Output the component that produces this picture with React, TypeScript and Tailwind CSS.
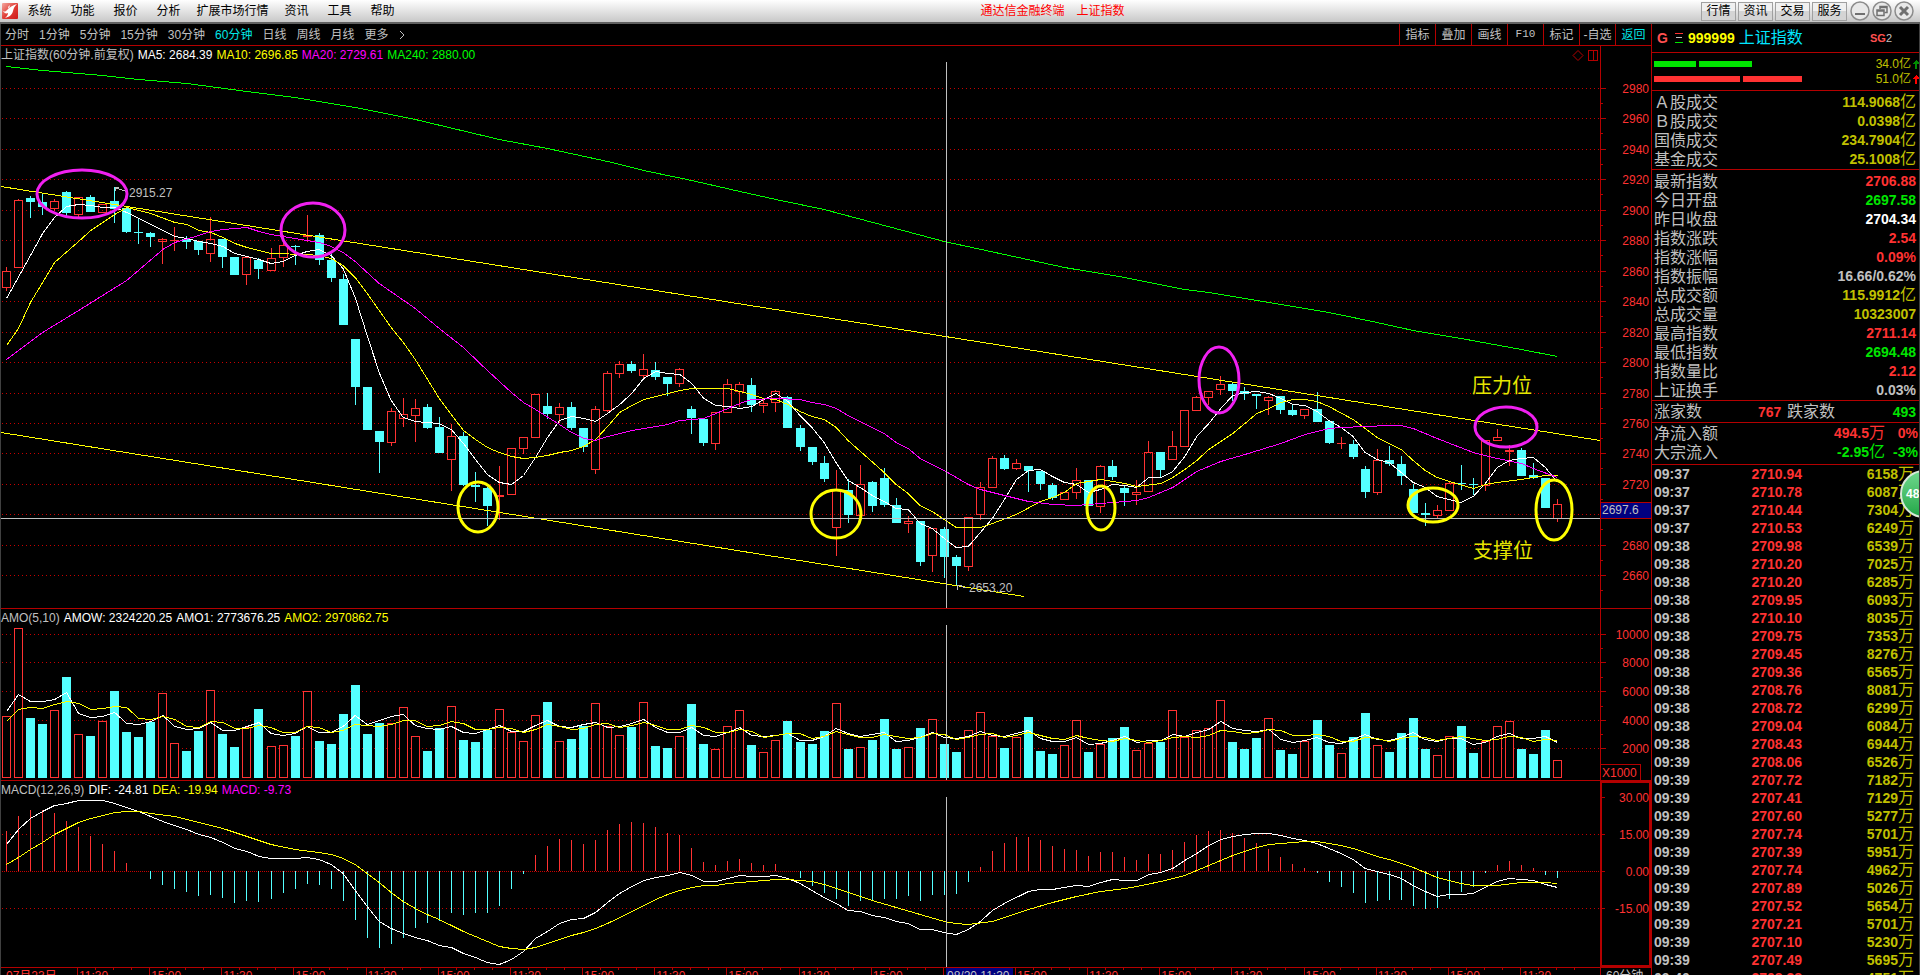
import React from "react";

/* ---------- chart data ---------- */

type Dir = "u" | "d";
type Candle = [Dir, number, number, number, number];

// direction, body top, body bottom, wick top, wick bottom (plot units)
const CANDLES: Candle[] = [
  ["u", 271, 288, 267, 291], ["u", 200, 268, 199, 268], ["d", 198, 202, 196, 218], ["d", 202, 207, 193, 215],
  ["u", 201, 209, 199, 211], ["d", 192, 213, 191, 216], ["u", 197, 215, 197, 217], ["d", 197, 212, 195, 212],
  ["u", 204, 213, 204, 213], ["d", 201, 209, 187, 223], ["d", 208, 232, 208, 233], ["d", 232, 233, 218, 244],
  ["d", 233, 237, 232, 247], ["u", 239, 242, 238, 264], ["u", 240, 241, 227, 251], ["d", 239, 242, 236, 249],
  ["d", 241, 250, 241, 255], ["u", 239, 254, 217, 262], ["d", 239, 257, 239, 268], ["d", 257, 275, 257, 275],
  ["u", 257, 275, 257, 285], ["d", 260, 269, 258, 279], ["u", 258, 271, 248, 271], ["u", 245, 258, 235, 267],
  ["d", 246, 247, 245, 265], ["u", 235, 237, 215, 242], ["d", 235, 260, 233, 265], ["d", 260, 278, 254, 282],
  ["d", 279, 325, 274, 325], ["d", 339, 387, 339, 405], ["d", 387, 430, 387, 430], ["d", 431, 442, 431, 473],
  ["u", 411, 443, 408, 446], ["u", 414, 419, 398, 427], ["u", 408, 416, 399, 442], ["d", 407, 428, 404, 429],
  ["d", 427, 453, 417, 453], ["u", 436, 460, 424, 491], ["d", 436, 485, 432, 486], ["d", 485, 487, 472, 502],
  ["d", 488, 506, 487, 526], ["u", 495, 497, 466, 520], ["u", 448, 495, 448, 495], ["u", 437, 449, 437, 454],
  ["u", 394, 438, 394, 438], ["d", 406, 414, 393, 419], ["u", 407, 415, 403, 423], ["d", 407, 428, 402, 430],
  ["d", 428, 447, 428, 452], ["u", 409, 470, 406, 474], ["u", 373, 411, 371, 412], ["u", 364, 374, 361, 378],
  ["d", 364, 371, 361, 373], ["u", 369, 376, 354, 379], ["d", 370, 377, 362, 380], ["d", 377, 384, 377, 396],
  ["u", 369, 384, 368, 387], ["d", 409, 418, 406, 434], ["d", 419, 443, 418, 446], ["u", 412, 444, 412, 450],
  ["u", 384, 413, 379, 413], ["u", 384, 392, 382, 407], ["d", 385, 405, 378, 412], ["u", 403, 406, 400, 413],
  ["u", 391, 403, 390, 412], ["d", 397, 428, 396, 428], ["d", 428, 447, 425, 451], ["d", 447, 462, 447, 465],
  ["d", 463, 479, 456, 482], ["u", 490, 528, 470, 556], ["d", 490, 515, 479, 523], ["u", 484, 516, 465, 516],
  ["d", 482, 506, 481, 512], ["d", 478, 505, 468, 507], ["d", 505, 523, 498, 523], ["u", 521, 524, 516, 533],
  ["d", 521, 562, 521, 566], ["u", 528, 556, 528, 572], ["d", 529, 557, 527, 578], ["d", 557, 566, 555, 586],
  ["u", 517, 567, 517, 571], ["u", 487, 515, 482, 520], ["u", 458, 488, 456, 488], ["d", 458, 469, 455, 470],
  ["u", 463, 469, 459, 470], ["d", 466, 471, 466, 492], ["d", 471, 484, 471, 490], ["d", 485, 498, 483, 500],
  ["u", 492, 500, 492, 500], ["u", 480, 493, 468, 499], ["d", 480, 506, 480, 506], ["u", 466, 507, 465, 513],
  ["d", 466, 477, 460, 480], ["d", 488, 493, 485, 506], ["u", 492, 495, 480, 505], ["u", 452, 492, 441, 492],
  ["d", 452, 470, 452, 477], ["u", 446, 460, 431, 460], ["u", 410, 447, 410, 447], ["u", 397, 411, 396, 411],
  ["u", 391, 398, 391, 405], ["u", 384, 390, 376, 395], ["d", 384, 391, 382, 401], ["d", 391, 394, 387, 400],
  ["d", 394, 396, 394, 409], ["u", 397, 401, 396, 415], ["d", 396, 410, 396, 414], ["d", 410, 415, 404, 416],
  ["u", 409, 416, 409, 419], ["d", 409, 422, 392, 422], ["d", 421, 443, 420, 444], ["u", 443, 444, 437, 449],
  ["d", 444, 457, 440, 459], ["d", 469, 492, 466, 498], ["u", 460, 493, 449, 495], ["d", 460, 464, 446, 466],
  ["d", 464, 476, 456, 485], ["d", 489, 513, 484, 513], ["d", 513, 515, 503, 526], ["u", 510, 516, 505, 519],
  ["u", 483, 511, 482, 511], ["d", 483, 484, 465, 490], ["d", 484, 485, 478, 495], ["u", 440, 486, 440, 491],
  ["u", 437, 441, 429, 441], ["u", 450, 452, 445, 466], ["d", 450, 476, 448, 476], ["d", 475, 478, 463, 479],
  ["d", 478, 508, 478, 508], ["u", 504, 519, 499, 522],
];

const VOLUME = [
  716, 628, 718, 724, 710, 677, 734, 736, 721, 691, 732, 737, 722, 693, 743, 751, 731, 690, 734, 747, 727, 709, 746, 745, 736, 691,
  741, 744, 714, 685, 734, 723, 723, 707, 736, 751, 728, 706, 740, 742, 730, 709, 732, 741, 715, 702, 741, 739, 726, 703, 726, 735,
  727, 702, 746, 748, 736, 704, 744, 749, 726, 710, 745, 752, 740, 721, 742, 744, 731, 703, 749, 747, 740, 719, 749, 747, 728, 719,
  744, 752, 730, 712, 736, 748, 737, 717, 751, 754, 745, 720, 752, 744, 738, 727, 750, 743, 742, 710, 737, 730, 728, 700, 742, 749,
  738, 718, 750, 754, 741, 720, 745, 753, 737, 713, 745, 752, 733, 718, 749, 755, 736, 726, 753, 741, 726, 721, 749, 754, 730, 760,
];

const AMO1 = [
  711, 694, 701, 701, 699, 692, 713, 717, 716, 712, 723, 724, 721, 715, 726, 729, 728, 722, 730, 730, 726, 722, 733, 735, 733, 726,
  732, 732, 726, 715, 724, 720, 716, 714, 725, 728, 729, 726, 732, 733, 729, 725, 731, 731, 725, 720, 726, 727, 724, 722, 727, 726,
  723, 719, 727, 732, 732, 727, 735, 736, 732, 727, 735, 736, 735, 733, 740, 740, 736, 728, 733, 736, 734, 732, 741, 740, 737, 732,
  737, 738, 736, 731, 735, 736, 733, 730, 738, 741, 741, 737, 744, 743, 740, 736, 742, 740, 740, 734, 736, 732, 729, 721, 728, 730,
  731, 729, 739, 742, 740, 737, 742, 743, 739, 734, 739, 740, 737, 732, 739, 741, 738, 738, 744, 742, 736, 733, 738, 738, 736, 742,
];

const AMO2 = [
  721, 709, 707, 708, 704, 701, 703, 709, 708, 706, 707, 718, 719, 716, 719, 726, 727, 721, 722, 728, 728, 725, 727, 732, 732, 726,
  727, 732, 730, 724, 725, 726, 724, 720, 720, 726, 725, 721, 723, 729, 729, 727, 728, 732, 729, 724, 726, 729, 728, 724, 723, 727,
  725, 722, 725, 729, 729, 725, 727, 732, 732, 729, 731, 737, 735, 733, 733, 738, 736, 731, 734, 737, 737, 734, 736, 738, 737, 733,
  734, 739, 737, 734, 733, 737, 735, 732, 735, 738, 739, 735, 738, 740, 741, 738, 740, 742, 740, 737, 736, 737, 735, 730, 731, 733,
  732, 729, 730, 735, 735, 734, 736, 741, 741, 737, 738, 741, 738, 736, 737, 740, 738, 736, 738, 740, 739, 736, 737, 741, 739, 740,
];

const HIST = [
  831, 816, 810, 810, 813, 821, 827, 836, 844, 851, 863, 871, 879, 885, 889, 892, 896, 895, 898, 903, 901, 902, 899, 893, 889, 884,
  885, 889, 901, 920, 938, 948, 944, 938, 928, 923, 921, 913, 915, 913, 913, 906, 889, 874, 855, 846, 839, 840, 844, 840, 830, 824,
  822, 823, 827, 833, 835, 848, 862, 865, 861, 859, 863, 865, 864, 871, 878, 886, 893, 899, 906, 901, 901, 899, 899, 896, 901, 895,
  895, 894, 882, 867, 851, 843, 837, 837, 840, 846, 849, 850, 856, 852, 852, 857, 860, 854, 854, 850, 842, 835, 831, 830, 833, 838,
  843, 849, 857, 864, 868, 873, 882, 887, 893, 903, 901, 900, 900, 906, 909, 908, 899, 892, 887, 873, 865, 861, 865, 868, 875, 878,
];

type Pt = [number, number];

const seq = (ys: number[]): Pt[] => ys.map((y, i) => [i, y]);

const MA5: Pt[] = [
  [0, 298], [2, 255], [3, 233], [4, 217], [5, 206], [6, 204], [7, 205], [8, 207], [9, 207], [10, 212], [11, 218], [12, 224], [13, 230],
  [14, 236], [15, 238], [16, 241], [17, 243], [18, 246], [19, 253], [20, 256], [21, 259], [22, 263], [23, 261], [24, 255], [25, 251],
  [26, 249], [27, 255], [28, 268], [29, 297], [30, 335], [31, 372], [32, 400], [33, 417], [34, 421], [35, 422], [36, 423], [37, 429],
  [38, 443], [39, 459], [40, 474], [41, 482], [42, 484], [43, 475], [44, 457], [45, 437], [46, 420], [47, 416], [48, 418], [49, 421],
  [50, 413], [51, 404], [52, 393], [53, 378], [54, 371], [55, 373], [56, 374], [57, 383], [58, 398], [59, 405], [60, 406], [61, 408],
  [62, 406], [63, 399], [64, 393], [65, 401], [66, 415], [67, 427], [68, 442], [69, 462], [70, 480], [71, 487], [72, 495], [73, 501],
  [74, 508], [75, 509], [76, 523], [77, 528], [78, 538], [79, 547], [80, 546], [81, 532], [82, 518], [83, 499], [84, 479], [85, 470],
  [86, 469], [87, 476], [88, 482], [89, 484], [90, 492], [91, 489], [92, 484], [93, 485], [94, 487], [95, 477], [96, 477], [97, 471],
  [98, 456], [99, 436], [100, 423], [101, 408], [102, 395], [103, 392], [104, 391], [105, 393], [106, 398], [107, 404], [108, 405],
  [109, 411], [110, 420], [111, 427], [112, 436], [113, 452], [114, 459], [115, 462], [116, 472], [117, 482], [118, 487], [119, 496],
  [120, 499], [121, 502], [122, 496], [123, 483], [124, 467], [125, 460], [126, 458], [127, 457], [128, 467], [129, 482],
];

const MA10: Pt[] = [
  [0, 345], [1, 328], [2, 302], [4, 262], [6, 241], [7, 230], [8, 222], [9, 214], [10, 207], [12, 213], [14, 222], [15, 224], [16, 230],
  [17, 232], [18, 237], [19, 243], [20, 247], [22, 253], [25, 254], [26, 255], [27, 258], [28, 265], [29, 277], [30, 293], [31, 310],
  [32, 327], [33, 342], [34, 359], [36, 398], [38, 430], [39, 439], [40, 447], [41, 452], [42, 456], [43, 458], [44, 457], [45, 455],
  [46, 452], [47, 450], [48, 446], [49, 439], [50, 426], [51, 412], [52, 405], [53, 399], [54, 396], [56, 390], [57, 388], [60, 388],
  [61, 391], [62, 394], [63, 398], [64, 399], [65, 404], [66, 411], [67, 416], [68, 419], [69, 427], [70, 440], [73, 472], [74, 484],
  [75, 493], [76, 505], [77, 511], [78, 519], [79, 527], [81, 527], [82, 523], [84, 514], [86, 501], [87, 497], [88, 492], [89, 483],
  [91, 479], [93, 483], [94, 486], [96, 483], [97, 477], [98, 469], [99, 460], [100, 449], [101, 441], [102, 433], [103, 423],
  [104, 413], [105, 408], [106, 402], [107, 399], [108, 399], [109, 401], [110, 406], [112, 419], [114, 437], [116, 449], [117, 460],
  [118, 470], [119, 477], [120, 481], [122, 488], [123, 484], [124, 482], [126, 479], [128, 475], [129, 475],
];

const MA20: Pt[] = [
  [0, 359], [3, 332], [6, 310], [10, 280], [13, 249], [14, 242], [16, 235], [17, 231], [18, 229], [20, 227], [21, 231], [22, 234],
  [24, 238], [26, 242], [27, 246], [28, 252], [29, 261], [31, 283], [34, 308], [36, 328], [38, 347], [40, 370], [42, 392], [43, 402],
  [44, 409], [46, 424], [47, 432], [48, 438], [49, 440], [50, 436], [51, 433], [52, 430], [53, 428], [55, 424], [56, 420], [58, 418],
  [60, 408], [61, 403], [62, 399], [64, 398], [66, 399], [67, 402], [68, 404], [69, 408], [70, 415], [73, 433], [74, 442], [75, 448],
  [76, 458], [78, 470], [80, 484], [81, 489], [83, 495], [85, 501], [87, 504], [89, 505], [91, 503], [94, 500], [95, 497], [97, 487],
  [99, 471], [101, 461], [103, 454], [106, 443], [108, 434], [110, 428], [111, 427], [115, 425], [116, 425], [117, 428], [119, 438],
  [122, 452], [124, 458], [126, 463], [127, 468], [129, 477],
];

const MA240: Pt[] = [
  [0, 66], [3, 70], [8, 75], [11, 79], [15, 83], [20, 91], [24, 97], [29, 107], [34, 119], [41, 139], [45, 148], [50, 161], [53, 170],
  [57, 180], [61, 191], [64, 199], [68, 209], [73, 225], [78, 241], [83, 254], [88, 267], [93, 277], [98, 289], [100, 292], [106, 304],
  [110, 312], [114, 322], [117, 330], [121, 338], [126, 349], [129, 356],
];

const DIF: Pt[] = [
  [0, 844], [1, 829], [2, 818], [3, 811], [4, 805], [5, 803], [6, 800], [8, 800], [9, 803], [10, 807], [11, 811], [12, 816], [13, 821],
  [14, 825], [15, 829], [16, 834], [17, 837], [18, 842], [19, 848], [20, 851], [21, 856], [22, 858], [24, 858], [25, 857], [26, 859],
  [27, 864], [28, 873], [29, 890], [30, 906], [31, 921], [32, 928], [33, 933], [34, 937], [35, 940], [36, 945], [37, 947], [38, 953],
  [39, 957], [40, 962], [41, 964], [42, 959], [43, 951], [44, 938], [45, 931], [46, 923], [47, 919], [48, 918], [49, 912], [50, 902],
  [51, 893], [52, 886], [53, 880], [54, 877], [55, 875], [56, 872], [57, 875], [58, 881], [59, 881], [60, 878], [61, 875], [62, 876],
  [63, 876], [64, 875], [65, 878], [66, 883], [67, 890], [68, 897], [69, 903], [70, 910], [71, 911], [72, 915], [73, 917], [74, 921],
  [75, 923], [76, 929], [77, 929], [78, 932], [79, 934], [80, 929], [81, 921], [82, 910], [83, 903], [84, 897], [85, 891], [86, 889],
  [87, 889], [88, 887], [89, 885], [90, 886], [91, 882], [92, 879], [93, 880], [94, 880], [95, 874], [96, 872], [97, 868], [98, 860],
  [99, 853], [100, 845], [101, 839], [102, 836], [103, 834], [104, 833], [105, 833], [106, 835], [107, 838], [108, 840], [109, 843],
  [110, 848], [111, 853], [112, 859], [113, 868], [114, 871], [115, 874], [116, 878], [117, 885], [118, 891], [119, 896], [120, 894],
  [121, 894], [122, 893], [123, 887], [124, 881], [125, 878], [126, 879], [127, 880], [128, 884], [129, 887],
];

const DEA: Pt[] = [
  [0, 864], [1, 857], [2, 849], [3, 842], [4, 834], [5, 828], [6, 822], [7, 818], [8, 815], [9, 812], [10, 811], [11, 811], [12, 813],
  [14, 816], [16, 822], [18, 828], [20, 836], [22, 844], [24, 849], [26, 852], [27, 854], [28, 858], [29, 864], [30, 873], [31, 882],
  [32, 892], [33, 901], [34, 908], [35, 914], [36, 919], [37, 925], [38, 931], [39, 936], [40, 941], [41, 946], [42, 948], [43, 949],
  [44, 947], [45, 943], [46, 939], [47, 935], [48, 932], [49, 928], [50, 923], [51, 917], [52, 911], [53, 905], [54, 899], [55, 894],
  [56, 890], [57, 887], [58, 885], [59, 885], [60, 883], [62, 881], [64, 879], [65, 879], [66, 880], [67, 881], [68, 884], [70, 892],
  [72, 900], [74, 907], [76, 914], [78, 921], [79, 923], [80, 924], [82, 921], [83, 917], [85, 909], [87, 902], [89, 896], [91, 891],
  [93, 888], [94, 886], [96, 881], [98, 875], [99, 870], [101, 860], [102, 855], [103, 851], [104, 847], [105, 844], [106, 843],
  [107, 842], [108, 841], [109, 841], [111, 845], [112, 848], [114, 856], [115, 859], [117, 867], [118, 872], [119, 877], [121, 883],
  [122, 885], [124, 885], [126, 882], [128, 882], [129, 883],
];

/* ---------- chart helpers ---------- */

const X0 = 1;
const PLOT_W = 1599;
const AXIS_W = 51;
const CURSOR_X = 946;
const cx = (i: number) => 6.5 + 12.023 * i;
const left = (i: number) => Math.round(cx(i) - 4.5);
const pct = (n: number) => `${n * 100}%`;

function Series({ pts, color }: { pts: Pt[]; color: string }) {
  return (
    <polyline
      points={pts.map(([i, y]) => `${cx(i).toFixed(1)},${y + 0.5}`).join(" ")}
      fill="none"
      stroke={color}
      strokeWidth={1}
    />
  );
}

function Grid({ ys, dash = "1 3" }: { ys: number[]; dash?: string }) {
  return (
    <>
      {ys.map((y) => (
        <line key={y} x1={2} x2={1600} y1={y + 0.5} y2={y + 0.5} stroke="#c80000" strokeDasharray={dash} />
      ))}
    </>
  );
}

type Tick = { y: number; label?: string };

type PaneProps = {
  title: React.ReactNode;
  top: number;
  height: number;
  ticks: Tick[];
  minor: number[];
  children: React.ReactNode;
  overlay?: React.ReactNode;
  axisExtra?: React.ReactNode;
  axisClass?: string;
};

function Pane({ title, top, height, ticks, minor, children, overlay, axisExtra, axisClass }: PaneProps) {
  const paneTop = top - 16;
  const paneH = height + 16;
  return (
    <section className="flex min-h-0 border-b border-[#b40000]">
      <div className="flex min-w-0 flex-1 flex-col">
        <h2 className="flex h-4 shrink-0 gap-1 whitespace-nowrap text-xs leading-[18px] text-[#c0c0c0]">{title}</h2>
        <div className="relative min-h-0 flex-1">
          <svg
            className="block h-full w-full"
            viewBox={`${X0} ${top} ${PLOT_W} ${height}`}
            preserveAspectRatio="none"
            shapeRendering="crispEdges"
          >
            {children}
          </svg>
          {overlay}
        </div>
      </div>
      <div className={`relative w-[51px] shrink-0 ${axisClass ?? "border-l border-[#b40000]"}`}>
        <svg
          className="absolute inset-0 h-full w-full"
          viewBox={`0 ${paneTop} ${AXIS_W} ${paneH}`}
          preserveAspectRatio="none"
          shapeRendering="crispEdges"
        >
          {ticks.map((t) => (
            <rect key={t.y} x={0} y={t.y} width={5} height={1} fill="#b40000" />
          ))}
          {minor.map((y) => (
            <rect key={y} x={0} y={y} width={2} height={1} fill="#b40000" />
          ))}
        </svg>
        {ticks.map((t) =>
          t.label ? (
            <span
              key={t.y}
              className="absolute right-[2px] -translate-y-1/2 text-xs leading-4 text-[#ff3232]"
              style={{ top: pct((t.y + 1 - paneTop) / paneH) }}
            >
              {t.label}
            </span>
          ) : null,
        )}
        {axisExtra}
      </div>
    </section>
  );
}

const PRICE_TICKS: Tick[] = [
  { y: 88, label: "2980" }, { y: 118, label: "2960" }, { y: 149, label: "2940" }, { y: 179, label: "2920" },
  { y: 210, label: "2900" }, { y: 240, label: "2880" }, { y: 271, label: "2860" }, { y: 301, label: "2840" },
  { y: 332, label: "2820" }, { y: 362, label: "2800" }, { y: 393, label: "2780" }, { y: 423, label: "2760" },
  { y: 453, label: "2740" }, { y: 484, label: "2720" }, { y: 514 }, { y: 545, label: "2680" }, { y: 575, label: "2660" },
];
const AMO_TICKS: Tick[] = [
  { y: 634, label: "10000" }, { y: 662, label: "8000" }, { y: 691, label: "6000" },
  { y: 720, label: "4000" }, { y: 748, label: "2000" },
];
const MACD_TICKS: Tick[] = [
  { y: 797, label: "30.00" }, { y: 834, label: "15.00" }, { y: 871, label: "0.00" }, { y: 908, label: "-15.00" },
];

const RINGS: [number, number, number, number, string][] = [
  [82, 194, 45, 24, "#f020f0"], [313, 230, 32, 27, "#f020f0"], [1219, 380, 20, 33, "#f020f0"], [1506, 427, 31, 20, "#f020f0"],
  [478, 507, 20, 25, "#ffff00"], [836, 514, 25, 24, "#ffff00"], [1101, 508, 14, 22, "#ffff00"], [1433, 505, 25, 17, "#ffff00"],
  [1554, 510, 18, 30, "#ffff00"],
];

function PlotNote({ x, y, className, children }: { x: number; y: number; className: string; children: React.ReactNode }) {
  return (
    <span
      className={`absolute -translate-y-1/2 whitespace-nowrap ${className}`}
      style={{ left: pct((x - X0) / PLOT_W), top: pct((y - 62) / 546) }}
    >
      {children}
    </span>
  );
}

function PricePane() {
  return (
    <Pane
      top={62}
      height={546}
      ticks={PRICE_TICKS}
      minor={PRICE_TICKS.map((t) => t.y + 15)}
      title={
        <>
          <span>上证指数(60分钟.前复权)</span>
          <span className="text-white">MA5: 2684.39</span>
          <span className="text-[#ffff00]">MA10: 2696.85</span>
          <span className="text-[#ff00ff]">MA20: 2729.61</span>
          <span className="text-[#00ff00]">MA240: 2880.00</span>
          <svg className="ml-auto h-4 w-7" viewBox="0 0 28 16" fill="none" stroke="#b40000">
            <path d="M6 4.500 L11 9.500 L6 14.500 L1 9.500 Z" />
            <path d="M16.500 4.500 H25.500 V14.500 H16.500 Z M21.500 4.500 V14.500" shapeRendering="crispEdges" />
          </svg>
        </>
      }
      overlay={
        <>
          <PlotNote x={129} y={193} className="text-xs leading-4 text-[#c0c0c0]">2915.27</PlotNote>
          <PlotNote x={969} y={588} className="text-xs leading-4 text-[#c0c0c0]">2653.20</PlotNote>
          <PlotNote x={1472} y={386} className="text-xl text-[#e6e600]">压力位</PlotNote>
          <PlotNote x={1473} y={551} className="text-xl text-[#e6e600]">支撑位</PlotNote>
        </>
      }
      axisExtra={
        <span
          className="absolute inset-x-0 h-[17px] border-y border-[#b40000] bg-[#000080] pl-px text-xs leading-[15px] text-[#c0c0c0]"
          style={{ top: pct((502 - 46) / 562) }}
        >
          2697.6
        </span>
      }
    >
      <Grid ys={PRICE_TICKS.map((t) => t.y)} />
      {CANDLES.map(([dir, t, b, hi, lo], i) => {
        const x = left(i);
        if (dir === "d")
          return (
            <g key={i} fill="#54ffff">
              <rect x={x} y={t} width={9} height={b - t} />
              <rect x={x + 4} y={hi} width={1} height={lo - hi} />
            </g>
          );
        return (
          <g key={i} fill="#ff3232">
            {b - t > 2 ? (
              <rect x={x + 0.5} y={t + 0.5} width={8} height={b - t - 1} fill="none" stroke="#ff3232" />
            ) : (
              <rect x={x} y={t} width={9} height={b - t} />
            )}
            <rect x={x + 4} y={hi} width={1} height={t - hi} />
            <rect x={x + 4} y={b} width={1} height={Math.max(0, lo - b)} />
          </g>
        );
      })}
      <Series pts={MA5} color="#ffffff" />
      <Series pts={MA10} color="#ffff00" />
      <Series pts={MA20} color="#ff00ff" />
      <Series pts={MA240} color="#00ff00" />
      <path d="M1 186.500 L1600 440.500 M1 432.500 L1024 596.500" stroke="#ffff00" fill="none" />
      <path d="M128 192 L116 188 M115 191 V187 H119 M966 588 L958 585 M957 590 V585 H962" stroke="#c0c0c0" fill="none" />
      <rect x={1} y={518} width={1599} height={1} fill="#c0c0c0" />
      <rect x={CURSOR_X} y={62} width={1} height={546} fill="#c0c0c0" />
      <g fill="none" strokeWidth={3} shapeRendering="auto">
        {RINGS.map(([x, y, rx, ry, c]) => (
          <ellipse key={x} cx={x} cy={y} rx={rx} ry={ry} stroke={c} />
        ))}
      </g>
    </Pane>
  );
}

function AmountPane() {
  return (
    <Pane
      top={625}
      height={155}
      ticks={AMO_TICKS}
      minor={[648, 677, 706, 734]}
      title={
        <>
          <span>AMO(5,10)</span>
          <span className="text-white">AMOW: 2324220.25</span>
          <span className="text-white">AMO1: 2773676.25</span>
          <span className="text-[#ffff00]">AMO2: 2970862.75</span>
        </>
      }
      axisExtra={
        <span className="absolute bottom-0 left-0 h-4 w-10 border-r border-t border-[#b40000] bg-black pl-px text-xs leading-4 text-[#ff3232]">
          X1000
        </span>
      }
    >
      <Grid ys={AMO_TICKS.map((t) => t.y)} />
      {VOLUME.map((y, i) =>
        CANDLES[i][0] === "d" ? (
          <rect key={i} x={left(i)} y={y} width={9} height={778 - y} fill="#54ffff" />
        ) : (
          <rect key={i} x={left(i) + 0.5} y={y + 0.5} width={8} height={777 - y} fill="#000" stroke="#ff3232" />
        ),
      )}
      <Series pts={seq(AMO1)} color="#ffffff" />
      <Series pts={seq(AMO2)} color="#ffff00" />
      <rect x={CURSOR_X} y={625} width={1} height={155} fill="#c0c0c0" />
    </Pane>
  );
}

function MacdPane() {
  return (
    <Pane
      top={797}
      height={170}
      ticks={MACD_TICKS}
      minor={[816, 853, 890]}
      axisClass="shadow-[inset_0_0_0_2px_#b40000]"
      title={
        <>
          <span>MACD(12,26,9)</span>
          <span className="text-white">DIF: -24.81</span>
          <span className="text-[#ffff00]">DEA: -19.94</span>
          <span className="text-[#ff00ff]">MACD: -9.73</span>
        </>
      }
    >
      <Grid ys={[834, 908]} />
      <Grid ys={[871]} dash="1 1" />
      {HIST.map((y, i) => (
        <rect
          key={i}
          x={left(i) + 4}
          y={Math.min(y, 871)}
          width={1}
          height={Math.abs(871 - y)}
          fill={y < 871 ? "#ff3232" : "#54ffff"}
        />
      ))}
      <Series pts={DIF} color="#ffffff" />
      <Series pts={DEA} color="#ffff00" />
      <rect x={CURSOR_X} y={797} width={1} height={170} fill="#c0c0c0" />
    </Pane>
  );
}

function TimeAxis() {
  const majors = Array.from({ length: 21 }, (_, k) => 77 + k * 72.15);
  return (
    <div className="flex h-[7px] overflow-hidden text-xs leading-4 text-[#ff3232]">
      <div className="relative h-4 flex-1">
        <svg
          className="absolute inset-0 h-4 w-full"
          viewBox={`${X0} 0 ${PLOT_W} 16`}
          preserveAspectRatio="none"
          shapeRendering="crispEdges"
        >
          {majors.map((x) => (
            <g key={x} fill="#b40000">
              <rect x={Math.round(x)} y={0} width={1} height={16} />
              {[18, 36, 54].map((d) => (
                <rect key={d} x={Math.round(x + d)} y={0} width={1} height={2} />
              ))}
            </g>
          ))}
        </svg>
        <span className="absolute top-0 left-[5px]">07月23日</span>
        {majors.map((x, k) =>
          k === 12 ? (
            <span
              key={x}
              className="absolute top-0 w-[67px] bg-[#000080] pl-px whitespace-nowrap text-[#c0c0c0]"
              style={{ left: pct((CURSOR_X - X0) / PLOT_W) }}
            >
              08/20 11:30
            </span>
          ) : (
            <span key={x} className="absolute top-0 pl-[2px]" style={{ left: pct((x - X0) / PLOT_W) }}>
              {k % 2 ? "15:00" : "11:30"}
            </span>
          ),
        )}
      </div>
      <span className="w-[51px] border-l border-[#b40000] pl-[5px] text-[#c0c0c0]">60分钟</span>
    </div>
  );
}

/* ---------- top bars ---------- */

const MENU = ["系统", "功能", "报价", "分析", "扩展市场行情", "资讯", "工具", "帮助"];
const PERIODS = ["分时", "1分钟", "5分钟", "15分钟", "30分钟", "60分钟", "日线", "周线", "月线", "更多"];
const TOOLS = ["指标", "叠加", "画线", "F10", "标记", "-自选", "返回"];

function Logo() {
  return (
    <svg className="ml-[2px] h-4 w-4 shrink-0" viewBox="0 0 16 16">
      <defs>
        <linearGradient id="logo" x1="0" y1="0" x2="1" y2="1">
          <stop offset="0" stopColor="#f4a8a0" />
          <stop offset="0.5" stopColor="#e04038" />
          <stop offset="1" stopColor="#d01818" />
        </linearGradient>
      </defs>
      <rect width="16" height="16" rx="1" fill="url(#logo)" />
      <path d="M0 7 C2 9 3 9 5 7 C8 4 11 2 15 1 C12 4 12 5 11 8 C10 12 7 14 3 15 C5 13 6 12 6 10 C4 11 2 10 0 7 Z" fill="#fff" />
      <path d="M6 4 L8 2 L7 6 Z" fill="#fff" />
    </svg>
  );
}

function WindowButton({ label, children }: { label: string; children: React.ReactNode }) {
  return (
    <button type="button" aria-label={label} className="h-5 w-5">
      <svg viewBox="0 0 20 20" className="h-5 w-5" fill="none" stroke="#707070">
        <circle cx="10" cy="10" r="9" fill="#e8e8e8" stroke="#8c8c8c" strokeWidth="1.5" />
        {children}
      </svg>
    </button>
  );
}

function TitleBar() {
  return (
    <header className="flex h-6 shrink-0 items-center border-b-2 border-[#606060] bg-linear-to-b from-white to-[#c8c8c8] text-xs text-black">
      <Logo />
      <nav className="flex">
        {MENU.map((m) => (
          <button
            key={m}
            type="button"
            className={`h-[22px] text-center whitespace-nowrap ${m.length > 2 ? "w-[85px]" : "w-[43px]"}`}
          >
            {m}
          </button>
        ))}
      </nav>
      <h1 className="flex flex-1 justify-center gap-3 whitespace-nowrap text-[#ff0000]">
        <span>通达信金融终端</span>
        <span>上证指数</span>
      </h1>
      <div className="mr-[3px] flex items-center gap-[2px]">
        {["行情", "资讯", "交易", "服务"].map((b) => (
          <button
            key={b}
            type="button"
            className="h-[19px] w-[35px] border border-[#a0a0a0] bg-linear-to-b from-[#f0f0f0] from-50% to-[#d4d4d4] to-50% leading-4"
          >
            {b}
          </button>
        ))}
      </div>
      <div className="flex items-center gap-[2px] pr-[6px]">
        <WindowButton label="最小化">
          <path d="M5 13 H15" strokeWidth="2" />
        </WindowButton>
        <WindowButton label="还原">
          <path d="M8 8 V5.500 H15 V11.500 H12.500 M8 6.500 H15" strokeWidth="1.500" />
          <path d="M5 9 H12 V14.500 H5 Z M5 10 H12" strokeWidth="1.500" />
        </WindowButton>
        <WindowButton label="关闭">
          <path d="M6 6 L14 14 M14 6 L6 14" strokeWidth="3" />
        </WindowButton>
      </div>
    </header>
  );
}

function Toolbar() {
  return (
    <div className="flex h-[22px] shrink-0 border-b border-[#b40000] text-xs text-[#c0c0c0]">
      <div className="flex flex-1 items-center gap-[10px] pl-1 whitespace-nowrap">
        {PERIODS.map((p) => (
          <button key={p} type="button" className={p === "60分钟" ? "text-[#00e6e6]" : ""}>
            {p}
          </button>
        ))}
        <svg className="h-3 w-2" viewBox="0 0 8 12" fill="none" stroke="#c0c0c0">
          <path d="M1 2 L5 6 L1 10" />
        </svg>
      </div>
      {TOOLS.map((t) => (
        <button
          key={t}
          type="button"
          className={`w-9 border-l border-[#b40000] text-center whitespace-nowrap ${t === "返回" ? "text-[#00e6e6]" : ""} ${t === "F10" ? "font-['Liberation_Mono',monospace] text-[11px]" : ""}`}
        >
          {t}
        </button>
      ))}
    </div>
  );
}

/* ---------- quote panel ---------- */

type Stat = [string, string, string, string?];

const RED = "text-[#ff3232]";
const GREEN = "text-[#00e600]";
const GOLD = "text-[#c0c000]";
const GREY = "text-[#c0c0c0]";

const TURNOVER: Stat[] = [
  ["Ａ股成交", "114.9068", GOLD, "亿"],
  ["Ｂ股成交", "0.0398", GOLD, "亿"],
  ["国债成交", "234.7904", GOLD, "亿"],
  ["基金成交", "25.1008", GOLD, "亿"],
];

const QUOTE: Stat[] = [
  ["最新指数", "2706.88", RED],
  ["今日开盘", "2697.58", GREEN],
  ["昨日收盘", "2704.34", "text-white"],
  ["指数涨跌", "2.54", RED],
  ["指数涨幅", "0.09%", RED],
  ["指数振幅", "16.66/0.62%", GREY],
  ["总成交额", "115.9912", GOLD, "亿"],
  ["总成交量", "10323007", GOLD],
  ["最高指数", "2711.14", RED],
  ["最低指数", "2694.48", GREEN],
  ["指数量比", "2.12", RED],
  ["上证换手", "0.03%", GREY],
];

const TRADES: [string, string, string][] = [
  ["09:37", "2710.94", "6158"], ["09:37", "2710.78", "6087"], ["09:37", "2710.44", "7304"], ["09:37", "2710.53", "6249"],
  ["09:38", "2709.98", "6539"], ["09:38", "2710.20", "7025"], ["09:38", "2710.20", "6285"], ["09:38", "2709.95", "6093"],
  ["09:38", "2710.10", "8035"], ["09:38", "2709.75", "7353"], ["09:38", "2709.45", "8276"], ["09:38", "2709.36", "6565"],
  ["09:38", "2708.76", "8081"], ["09:38", "2708.72", "6299"], ["09:38", "2709.04", "6084"], ["09:38", "2708.43", "6944"],
  ["09:39", "2708.06", "6526"], ["09:39", "2707.72", "7182"], ["09:39", "2707.41", "7129"], ["09:39", "2707.60", "5277"],
  ["09:39", "2707.74", "5701"], ["09:39", "2707.39", "5951"], ["09:39", "2707.74", "4962"], ["09:39", "2707.89", "5026"],
  ["09:39", "2707.52", "5654"], ["09:39", "2707.21", "5701"], ["09:39", "2707.10", "5230"], ["09:39", "2707.49", "5695"],
  ["09:40", "2708.38", "4751"],
];

function Unit({ children }: { children: React.ReactNode }) {
  return <span className="text-base leading-[18px] font-normal">{children}</span>;
}

function StatTable({ rows }: { rows: Stat[] }) {
  return (
    <table className="w-full border-b border-[#b40000]">
      <tbody>
        {rows.map(([name, value, color, unit]) => (
          <tr key={name} className="h-[19px] leading-[19px]">
            <th scope="row" className="pl-[2px] text-left text-base leading-[19px] font-normal text-[#c0c0c0]">
              {name}
            </th>
            <td className={`pr-[3px] text-right text-sm leading-[19px] font-bold ${color}`}>
              {value}
              {unit ? <Unit>{unit}</Unit> : null}
            </td>
          </tr>
        ))}
      </tbody>
    </table>
  );
}

function DepthRow({ parts, bar, value, arrow }: { parts: string[]; bar: string; value: string; arrow: string }) {
  return (
    <div className="flex h-[15px] items-center">
      <div className="flex flex-1 gap-[3px] pl-[2px]">
        {parts.map((w) => (
          <span key={w} className={`h-[6px] ${w} ${bar}`} />
        ))}
      </div>
      <span className="text-xs text-[#c0c000]">{value}</span>
      <svg className="ml-[2px] h-[9px] w-[6px]" viewBox="0 0 6 9" fill={arrow} shapeRendering="crispEdges">
        <path d="M3 0 L6 3 V4 H4 V9 H2 V4 H0 V3 Z" />
      </svg>
    </div>
  );
}

function QuotePanel() {
  return (
    <aside className="relative flex w-[269px] shrink-0 flex-col overflow-hidden border-r border-l border-r-[#404040] border-l-[#b40000]">
      <div className="flex h-[29px] shrink-0 items-center border-b border-[#b40000] pl-[5px]">
        <span className="w-4 text-sm font-bold text-[#ff5050]">G</span>
        <svg className="mr-[5px] ml-[2px] h-[10px] w-2" viewBox="0 0 8 10" shapeRendering="crispEdges">
          <rect x="0" y="0" width="8" height="1" fill="#ff3232" />
          <rect x="1" y="4" width="6" height="1" fill="#c0c0c0" />
          <rect x="0" y="9" width="8" height="1" fill="#00e600" />
        </svg>
        <span className="text-sm font-bold text-[#ffff00]">999999</span>
        <span className="ml-1 text-base leading-5 font-normal text-[#00e6ff]">上证指数</span>
        <span className="mr-[27px] ml-auto pt-px text-[11px] text-[#c0c0c0]">
          <b className="text-[#ff5050]">SG</b>2
        </span>
      </div>
      <div className="flex h-[38px] shrink-0 flex-col justify-center border-b border-[#b40000]">
        <DepthRow parts={["w-[42px]", "w-[53px]"]} bar="bg-[#00e600]" value="34.0亿" arrow="#008c00" />
        <DepthRow parts={["w-[86px]", "w-[59px]"]} bar="bg-[#ff3232]" value="51.0亿" arrow="#ff0000" />
      </div>
      <div className="pt-[2px]">
        <StatTable rows={TURNOVER} />
      </div>
      <div className="pt-[2px]">
        <StatTable rows={QUOTE} />
      </div>
      <div className="grid h-[22px] shrink-0 grid-cols-[104px_24px_1fr_auto] items-center border-b border-[#b40000] pr-[3px] pl-[2px] text-sm font-bold">
        <span className="text-base leading-5 font-normal text-[#c0c0c0]">涨家数</span>
        <span className="text-[#ff3232]">767</span>
        <span className="pl-[5px] text-base leading-5 font-normal text-[#c0c0c0]">跌家数</span>
        <span className="text-[#00e600]">493</span>
      </div>
      <div className="border-b border-[#b40000] pt-px pb-[2px]">
        <table className="w-full text-right text-sm leading-[19px] font-bold">
          <tbody>
            <tr className="h-[19px] text-[#ff3232]">
              <th scope="row" className="pl-[2px] text-left text-base leading-[19px] font-normal text-[#c0c0c0]">净流入额</th>
              <td className="leading-[19px]">494.5<Unit>万</Unit></td>
              <td className="w-[34px] pr-px">0%</td>
            </tr>
            <tr className="h-[19px] text-[#00e600]">
              <th scope="row" className="pl-[2px] text-left text-base leading-[19px] font-normal text-[#c0c0c0]">大宗流入</th>
              <td className="leading-[19px]">-2.95<Unit>亿</Unit></td>
              <td className="w-[34px] pr-px">-3%</td>
            </tr>
          </tbody>
        </table>
      </div>
      <div className="min-h-0 flex-1 overflow-hidden">
        <table className="w-full table-fixed text-sm font-bold">
          <tbody>
            {TRADES.map(([time, price, vol], i) => (
              <tr key={i} className="h-[18px] leading-[18px]">
                <td className="w-[60px] pl-[2px] text-[#c0c0c0]">{time}</td>
                <td className="w-[90px] text-right text-[#ff3232]">{price}</td>
                <td className="pr-[5px] text-right leading-[18px] text-[#c0c000]">
                  {vol}
                  <Unit>万</Unit>
                </td>
              </tr>
            ))}
          </tbody>
        </table>
      </div>
      <button
        type="button"
        className="absolute top-[446px] -right-[29px] h-12 w-12 rounded-full border-2 border-[#d8e8d8] bg-linear-to-b from-[#6cd88c] to-[#1fa848] pl-1 text-left text-xs font-bold text-white"
      >
        48
      </button>
    </aside>
  );
}

export default function App() {
  return (
    <div className="flex h-screen flex-col overflow-hidden bg-black font-['Liberation_Sans','Noto_Sans_CJK_SC',sans-serif]">
      <TitleBar />
      <div className="flex min-h-0 flex-1">
        <main className="flex min-w-0 flex-1 flex-col border-l border-[#404040]">
          <Toolbar />
          <div className="grid min-h-0 flex-1 grid-rows-[563fr_172fr_187fr]">
            <PricePane />
            <AmountPane />
            <MacdPane />
          </div>
          <TimeAxis />
        </main>
        <QuotePanel />
      </div>
    </div>
  );
}
